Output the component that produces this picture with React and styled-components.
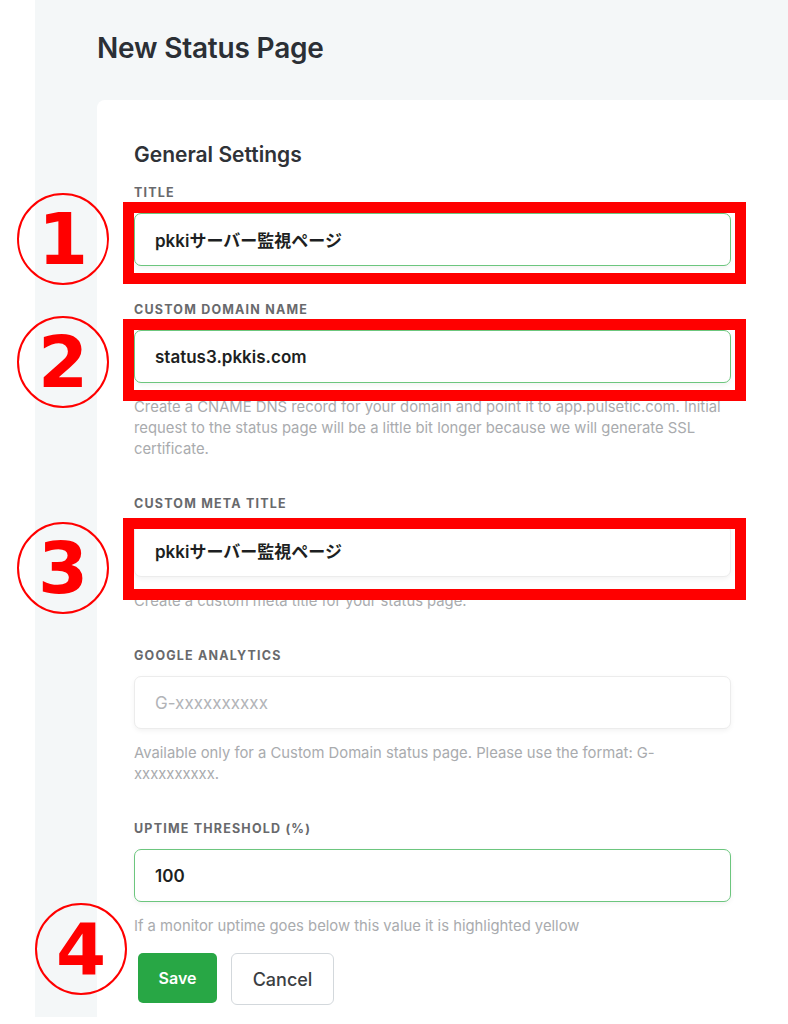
import React from 'react';
import styled, { createGlobalStyle } from 'styled-components';

const GlobalStyle = createGlobalStyle`
  body {
    margin: 0;
    background: #ffffff;
    font-family: Inter, "Noto Sans CJK JP", sans-serif;
  }
`;

const fields = [
  {
    label: 'Title',
    value: 'pkkiサーバー監視ページ',
    tone: 'valid',
    mark: { no: '1', top: -11, bottom: -18, badgeTop: 8 },
  },
  {
    label: 'Custom Domain Name',
    value: 'status3.pkkis.com',
    tone: 'valid',
    help: 'Create a CNAME DNS record for your domain and point it to app.pulsetic.com. Initial request to the status page will be a little bit longer because we will generate SSL certificate.',
    mark: { no: '2', top: -11, bottom: -18, badgeTop: 14 },
  },
  {
    label: 'Custom Meta Title',
    value: 'pkkiサーバー監視ページ',
    help: 'Create a custom meta title for your status page.',
    mark: { no: '3', top: -6, bottom: -23, badgeTop: 26 },
  },
  {
    label: 'Google Analytics',
    placeholder: 'G-xxxxxxxxxx',
    help: 'Available only for a Custom Domain status page. Please use the format: G-xxxxxxxxxx.',
  },
  {
    label: 'Uptime Threshold (%)',
    value: '100',
    tone: 'valid',
    help: 'If a monitor uptime goes below this value it is highlighted yellow',
  },
];

const App = () => {
  return (
    <>
      <GlobalStyle />
      <Page>
        <Main>
          <PageTitle>New Status Page</PageTitle>
          <Card>
            <SectionTitle>General Settings</SectionTitle>
            {fields.map((f) => (
              <Field key={f.label}>
                <Label>{f.label}</Label>
                <InputWrap>
                  <Input
                    $tone={f.tone}
                    defaultValue={f.value}
                    placeholder={f.placeholder}
                    readOnly
                  />
                  {f.mark && <Marker $top={f.mark.top} $bottom={f.mark.bottom} />}
                </InputWrap>
                {f.help && <Help>{f.help}</Help>}
                {f.mark && (
                  <Badge $top={f.mark.badgeTop} $left={-117}>
                    {f.mark.no}
                  </Badge>
                )}
              </Field>
            ))}
            <Actions>
              <SaveButton>Save</SaveButton>
              <CancelButton>Cancel</CancelButton>
              <Badge $top={-50} $left={-99}>4</Badge>
            </Actions>
          </Card>
        </Main>
      </Page>
    </>
  );
};

const Page = styled.div`
  padding-left: 35px;
  height: 1024px;
  overflow: hidden;
`;

const Main = styled.main`
  display: flex;
  flex-direction: column;
  background: #f4f7f8;
  height: 1017px;
  padding-left: 62px;
`;

const PageTitle = styled.h1`
  margin: 0 0 36px;
  padding-top: 32px;
  height: 32px;
  line-height: 32px;
  font-size: 28px;
  font-weight: 600;
  color: #2b2f35;
  letter-spacing: -0.2px;
`;

const Card = styled.section`
  flex: 1;
  background: #ffffff;
  border-radius: 8px 0 0 0;
  padding: 42px 0 0 37px;
`;

const SectionTitle = styled.h2`
  margin: 0 0 17px;
  font-size: 21px;
  line-height: 26px;
  font-weight: 600;
  color: #2f3237;
`;

const Field = styled.div`
  position: relative;
  width: 597px;
  margin-bottom: 36px;
`;

const Label = styled.div`
  font-size: 12.5px;
  line-height: 16px;
  font-weight: 700;
  letter-spacing: 1.2px;
  text-transform: uppercase;
  color: #68696c;
  margin-bottom: 12px;
`;

const InputWrap = styled.div`
  position: relative;
`;

const Input = styled.input`
  box-sizing: border-box;
  display: block;
  width: 100%;
  height: 53px;
  padding: 0 20px;
  border-radius: 7px;
  border: 1.5px solid ${(p) => (p.$tone === 'valid' ? '#6cc67e' : '#ececec')};
  box-shadow: 0 2px 5px rgba(0, 0, 0, 0.05);
  background: #ffffff;
  font-family: Inter, "Noto Sans CJK JP", sans-serif;
  font-size: 17px;
  font-weight: 600;
  color: #1d1f22;
  outline: none;

  &::placeholder {
    color: #b2b4b8;
    font-weight: 400;
  }
`;

const Marker = styled.div`
  position: absolute;
  top: ${(p) => p.$top}px;
  bottom: ${(p) => p.$bottom}px;
  left: -11px;
  right: -15px;
  border: 11px solid #ff0000;
  pointer-events: none;
`;

const Help = styled.p`
  margin: 14px 0 0;
  font-size: 14.8px;
  line-height: 21px;
  color: #a9abae;
`;

const Badge = styled.div`
  position: absolute;
  top: ${(p) => p.$top}px;
  left: ${(p) => p.$left}px;
  width: 92px;
  height: 92px;
  box-sizing: border-box;
  border: 2px solid #ff0000;
  border-radius: 50%;
  display: flex;
  align-items: center;
  justify-content: center;
  font-family: "DejaVu Sans", sans-serif;
  font-size: 72px;
  font-weight: 700;
  color: #ff0000;
  line-height: 1;
`;

const Actions = styled.div`
  position: relative;
  display: flex;
  align-items: flex-start;
  gap: 14px;
  padding-left: 4px;
  margin-top: -20px;
`;

const SaveButton = styled.button`
  width: 79px;
  height: 50px;
  border: none;
  border-radius: 5px;
  background: #28a745;
  color: #ffffff;
  font-family: Inter, sans-serif;
  font-size: 16px;
  font-weight: 600;
`;

const CancelButton = styled.button`
  width: 103px;
  height: 52px;
  border: 1.5px solid #d3d8dc;
  border-radius: 6px;
  background: #ffffff;
  color: #3b3e42;
  font-family: Inter, sans-serif;
  font-size: 18px;
  font-weight: 500;
`;

export default App;
